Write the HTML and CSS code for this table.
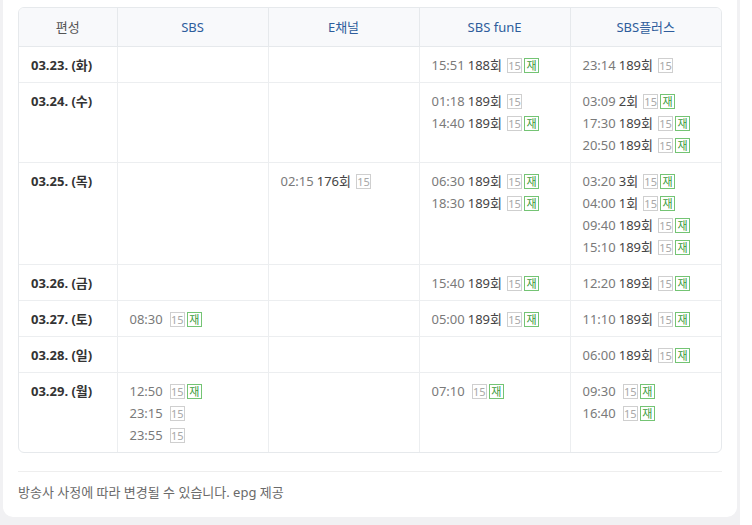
FILE: index.html
```html
<!DOCTYPE html>
<html lang="ko">
<head>
<meta charset="utf-8">
<link rel="stylesheet" href="styles.css">
</head>
<body>
<div class="page">
  <div class="card">
    <div class="table-wrap">
      <table class="sched">
        <colgroup>
          <col class="c-date"><col class="c-ch"><col class="c-ch"><col class="c-ch"><col class="c-ch">
        </colgroup>
        <thead>
          <tr>
            <th class="h-date">편성</th>
            <th>SBS</th>
            <th>E채널</th>
            <th>SBS funE</th>
            <th>SBS플러스</th>
          </tr>
        </thead>
        <tbody>
          <tr>
            <td class="date">03.23. (화)</td>
            <td></td>
            <td></td>
            <td><div class="e"><span class="t">15:51</span> <span class="ep">188회</span><span class="b b15">15</span><span class="b br">재</span></div></td>
            <td><div class="e"><span class="t">23:14</span> <span class="ep">189회</span><span class="b b15">15</span></div></td>
          </tr>
          <tr>
            <td class="date">03.24. (수)</td>
            <td></td>
            <td></td>
            <td>
              <div class="e"><span class="t">01:18</span> <span class="ep">189회</span><span class="b b15">15</span></div>
              <div class="e"><span class="t">14:40</span> <span class="ep">189회</span><span class="b b15">15</span><span class="b br">재</span></div>
            </td>
            <td>
              <div class="e"><span class="t">03:09</span> <span class="ep">2회</span><span class="b b15">15</span><span class="b br">재</span></div>
              <div class="e"><span class="t">17:30</span> <span class="ep">189회</span><span class="b b15">15</span><span class="b br">재</span></div>
              <div class="e"><span class="t">20:50</span> <span class="ep">189회</span><span class="b b15">15</span><span class="b br">재</span></div>
            </td>
          </tr>
          <tr>
            <td class="date">03.25. (목)</td>
            <td></td>
            <td><div class="e"><span class="t">02:15</span> <span class="ep">176회</span><span class="b b15">15</span></div></td>
            <td>
              <div class="e"><span class="t">06:30</span> <span class="ep">189회</span><span class="b b15">15</span><span class="b br">재</span></div>
              <div class="e"><span class="t">18:30</span> <span class="ep">189회</span><span class="b b15">15</span><span class="b br">재</span></div>
            </td>
            <td>
              <div class="e"><span class="t">03:20</span> <span class="ep">3회</span><span class="b b15">15</span><span class="b br">재</span></div>
              <div class="e"><span class="t">04:00</span> <span class="ep">1회</span><span class="b b15">15</span><span class="b br">재</span></div>
              <div class="e"><span class="t">09:40</span> <span class="ep">189회</span><span class="b b15">15</span><span class="b br">재</span></div>
              <div class="e"><span class="t">15:10</span> <span class="ep">189회</span><span class="b b15">15</span><span class="b br">재</span></div>
            </td>
          </tr>
          <tr>
            <td class="date">03.26. (금)</td>
            <td></td>
            <td></td>
            <td><div class="e"><span class="t">15:40</span> <span class="ep">189회</span><span class="b b15">15</span><span class="b br">재</span></div></td>
            <td><div class="e"><span class="t">12:20</span> <span class="ep">189회</span><span class="b b15">15</span><span class="b br">재</span></div></td>
          </tr>
          <tr>
            <td class="date">03.27. (토)</td>
            <td><div class="e"><span class="t">08:30</span> <span class="ep empty"></span><span class="b b15">15</span><span class="b br">재</span></div></td>
            <td></td>
            <td><div class="e"><span class="t">05:00</span> <span class="ep">189회</span><span class="b b15">15</span><span class="b br">재</span></div></td>
            <td><div class="e"><span class="t">11:10</span> <span class="ep">189회</span><span class="b b15">15</span><span class="b br">재</span></div></td>
          </tr>
          <tr>
            <td class="date">03.28. (일)</td>
            <td></td>
            <td></td>
            <td></td>
            <td><div class="e"><span class="t">06:00</span> <span class="ep">189회</span><span class="b b15">15</span><span class="b br">재</span></div></td>
          </tr>
          <tr>
            <td class="date">03.29. (월)</td>
            <td>
              <div class="e"><span class="t">12:50</span> <span class="ep empty"></span><span class="b b15">15</span><span class="b br">재</span></div>
              <div class="e"><span class="t">23:15</span> <span class="ep empty"></span><span class="b b15">15</span></div>
              <div class="e"><span class="t">23:55</span> <span class="ep empty"></span><span class="b b15">15</span></div>
            </td>
            <td></td>
            <td><div class="e"><span class="t">07:10</span> <span class="ep empty"></span><span class="b b15">15</span><span class="b br">재</span></div></td>
            <td>
              <div class="e"><span class="t">09:30</span> <span class="ep empty"></span><span class="b b15">15</span><span class="b br">재</span></div>
              <div class="e"><span class="t">16:40</span> <span class="ep empty"></span><span class="b b15">15</span><span class="b br">재</span></div>
            </td>
          </tr>
        </tbody>
      </table>
    </div>
    <div class="foot">방송사 사정에 따라 변경될 수 있습니다. epg 제공</div>
  </div>
</div>
</body>
</html>
```

FILE: styles.css
```css
html, body {
  margin: 0;
  padding: 0;
  background: #ffffff;
}
body {
  font-family: "Noto Sans", "Noto Sans CJK KR", sans-serif;
  font-size: 13px;
  color: #333;
}
.page {
  width: 734px;
  height: 525px;
  background: #f1f1f3;
  padding: 0 3px;
  box-sizing: content-box;
}
.card {
  background: #ffffff;
  border-radius: 0 0 10px 10px;
  padding: 7px 15px 0 15px;
  height: 517px;
  box-sizing: border-box;
}
.table-wrap {
  border: 1px solid #e6e9ec;
  border-radius: 6px;
  overflow: hidden;
}
.sched {
  width: 100%;
  border-collapse: collapse;
  table-layout: fixed;
}
.c-date { width: 98px; }
.sched th {
  background: #f8f9fb;
  color: #2e5d9c;
  font-weight: normal;
  font-size: 13px;
  line-height: 22px;
  padding: 8px 0;
  text-align: center;
  border-bottom: 1px solid #e6e9ec;
  border-left: 1px solid #e6e9ec;
}
.sched th.h-date {
  color: #555;
  border-left: none;
}
.sched td {
  vertical-align: top;
  padding: 7px 12px 6px 12px;
  line-height: 22px;
  border-top: 1px solid #eceef0;
  border-left: 1px solid #eceef0;
  white-space: nowrap;
}
.sched tbody tr:first-child td { border-top: none; }
.sched td.date {
  border-left: none;
  font-weight: bold;
  color: #333;
}
.e {
  height: 22px;
  display: flex;
  align-items: center;
}
.t { color: #7a7a7a; }
.ep { color: #444; margin-left: 3px; margin-right: 5px; }
.ep.empty { margin-left: 2px; margin-right: 5px; }
.b {
  display: inline-flex;
  align-items: center;
  justify-content: center;
  width: 13px;
  height: 13px;
  font-size: 11px;
  line-height: 1;
  margin-right: 2px;
}
.b15 {
  border: 1px solid #cfcfcf;
  color: #a8a8a8;
}
.br {
  border: 1px solid #74c474;
  color: #3b9c3b;
}
.foot {
  margin-top: 18px;
  border-top: 1px solid #eeeeee;
  padding-top: 9px;
  color: #6a6a6a;
  font-size: 13px;
  line-height: 22px;
}
```
